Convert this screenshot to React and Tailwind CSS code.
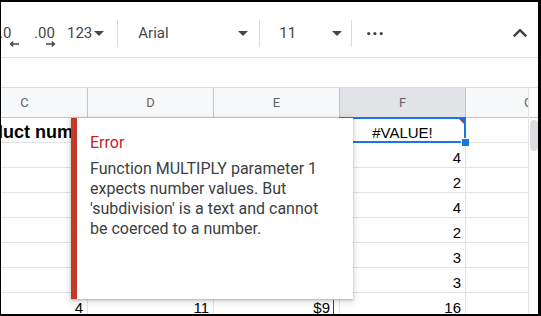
const ink = '#444746'

function Caret() {
  return (
    <svg width="10" height="5" viewBox="0 0 10 5" className="shrink-0">
      <path d="M0 0h10L5 5z" fill={ink} />
    </svg>
  )
}

function Toolbar() {
  return (
    <div className="flex items-start h-[56px] border-b border-[#dadce0] pt-[21px] text-[15px] leading-[20px] text-[#444746]">
      <div className="w-[20px] ml-[-2px] shrink-0">
        <div>.0</div>
        <svg width="10" height="6" viewBox="0 0 10 6" className="ml-[10px] mt-[-2px]">
          <path d="M10 3H1.8M4.3 .6 1.6 3l2.7 2.4" stroke={ink} strokeWidth="1.4" fill="none" />
        </svg>
      </div>
      <div className="w-[22px] ml-[15px] shrink-0">
        <div>.00</div>
        <svg width="10" height="6" viewBox="0 0 10 6" className="ml-[12px] mt-[-2px]">
          <path d="M0 3h8.2M5.7 .6 8.4 3 5.7 5.4" stroke={ink} strokeWidth="1.4" fill="none" />
        </svg>
      </div>
      <div className="ml-[11px] flex items-center gap-[2px]">
        <span>123</span>
        <Caret />
      </div>
      <div className="ml-[13px] mt-[-3px] w-px h-[27px] bg-[#dadce0]" />
      <div className="ml-[20px] w-[110px] flex items-center justify-between">
        <span>Arial</span>
        <Caret />
      </div>
      <div className="ml-[11px] mt-[-3px] w-px h-[27px] bg-[#dadce0]" />
      <div className="ml-[19px] w-[63px] flex items-center justify-between">
        <span>11</span>
        <Caret />
      </div>
      <div className="ml-[9px] mt-[-3px] w-px h-[27px] bg-[#dadce0]" />
      <svg width="17" height="20" viewBox="0 0 17 20" className="ml-[15px]">
        <circle cx="1.7" cy="10.6" r="1.6" fill={ink} />
        <circle cx="7.9" cy="10.6" r="1.6" fill={ink} />
        <circle cx="14.2" cy="10.6" r="1.6" fill={ink} />
      </svg>
      <svg width="16" height="20" viewBox="0 0 16 20" className="ml-auto mr-[10px]">
        <path d="M1.8 13.4 8 7.2l6.2 6.2" stroke="#3c4043" strokeWidth="2.4" fill="none" />
      </svg>
    </div>
  )
}

const rows = [
  { C: 'Product number', F: '#VALUE!' },
  { F: '4' },
  { F: '2' },
  { F: '4' },
  { F: '2' },
  { F: '3' },
  { F: '3' },
  { C: '4', D: '11', E: '$9', F: '16' },
]

function Cell({ col, value, rowIndex }) {
  const first = rowIndex === 0
  if (first && col === 'C') {
    return (
      <div className="relative w-[126px] shrink-0 border-r border-[#e2e2e2] flex items-end pb-[2px] whitespace-nowrap text-[18px] leading-[16px] font-bold text-black">
        {value}
      </div>
    )
  }
  if (first && col === 'F') {
    return (
      <div className="relative w-[126px] shrink-0 border-r border-[#e2e2e2] flex items-end justify-center pb-[1px] text-[15px] leading-[16px] text-black">
        {value}
        <div className="absolute -inset-px border-2 border-[#1a73e8]">
          <div className="absolute top-0 right-0 w-0 h-0 border-t-[5px] border-l-[5px] border-t-[#9c3d62] border-l-transparent" />
        </div>
        <div className="absolute -right-[4px] -bottom-[4px] w-[7px] h-[7px] bg-[#1a73e8] ring-1 ring-white" />
      </div>
    )
  }
  return (
    <div className="w-[126px] shrink-0 border-r border-[#e2e2e2] flex items-end justify-end pb-[1px] pr-[4px] text-[15px] leading-[16px] text-black">
      {value}
      {col === 'E' && value && <span className="ml-[3px] mr-[1px] mb-[1px] w-px h-[15px] bg-[#3c4043]" />}
    </div>
  )
}

export default function App() {
  const cols = ['C', 'D', 'E', 'F', 'G']
  return (
    <div className="relative w-[541px] h-[316px] overflow-hidden bg-white border-t-2 border-l border-r-[3px] border-b-2 border-black font-['Roboto',sans-serif]">
      <Toolbar />
      <div className="h-[30px] border-b border-[#dadce0]" />

      <div className="flex">
        <div className="w-[527px] overflow-hidden">
          <div className="ml-[-39px] w-[630px]">
            <div className="flex h-[30px] border-b border-[#c4c7c5] bg-[#f8f9fa]">
              {cols.map((c) => (
                <div
                  key={c}
                  className={`w-[126px] shrink-0 border-r border-[#c4c7c5] flex items-center justify-center text-[13px] text-[#5f6368] ${c === 'F' ? 'bg-[#e1e3e6]' : ''}`}
                >
                  {c}
                </div>
              ))}
            </div>
            <div className="font-['Liberation_Sans',Arial,sans-serif]">
              {rows.map((r, i) => (
                <div key={i} className="flex h-[25px] border-b border-[#e2e2e2]">
                  {cols.map((c) => (
                    <Cell key={c} col={c} value={r[c]} rowIndex={i} />
                  ))}
                </div>
              ))}
            </div>
          </div>
        </div>
        <div className="w-[10px] border-l border-[#e2e2e2]">
          <div className="h-[30px] border-b border-[#c4c7c5]" />
          <div className="mt-[2px] ml-[1px] w-[8px] h-[31px] rounded-full bg-[#dadce0]" />
        </div>
      </div>

      {/* error tooltip over the sheet */}
      <div className="absolute left-[70px] top-[116px] w-[282px] h-[181px] flex bg-white shadow-[0_1px_2px_rgba(60,64,67,0.3),0_2px_6px_2px_rgba(60,64,67,0.15)]">
        <div className="w-[6px] shrink-0 bg-[#c5392b]" />
        <div className="pl-[13px] pt-[15px] pr-[18px] text-[16px] leading-[20px]">
          <div className="text-[#c5221f]">Error</div>
          <div className="mt-[6px] text-[#3c4043]">
            Function MULTIPLY parameter 1 expects number values. But 'subdivision' is a text and cannot be coerced to a number.
          </div>
        </div>
      </div>
    </div>
  )
}
